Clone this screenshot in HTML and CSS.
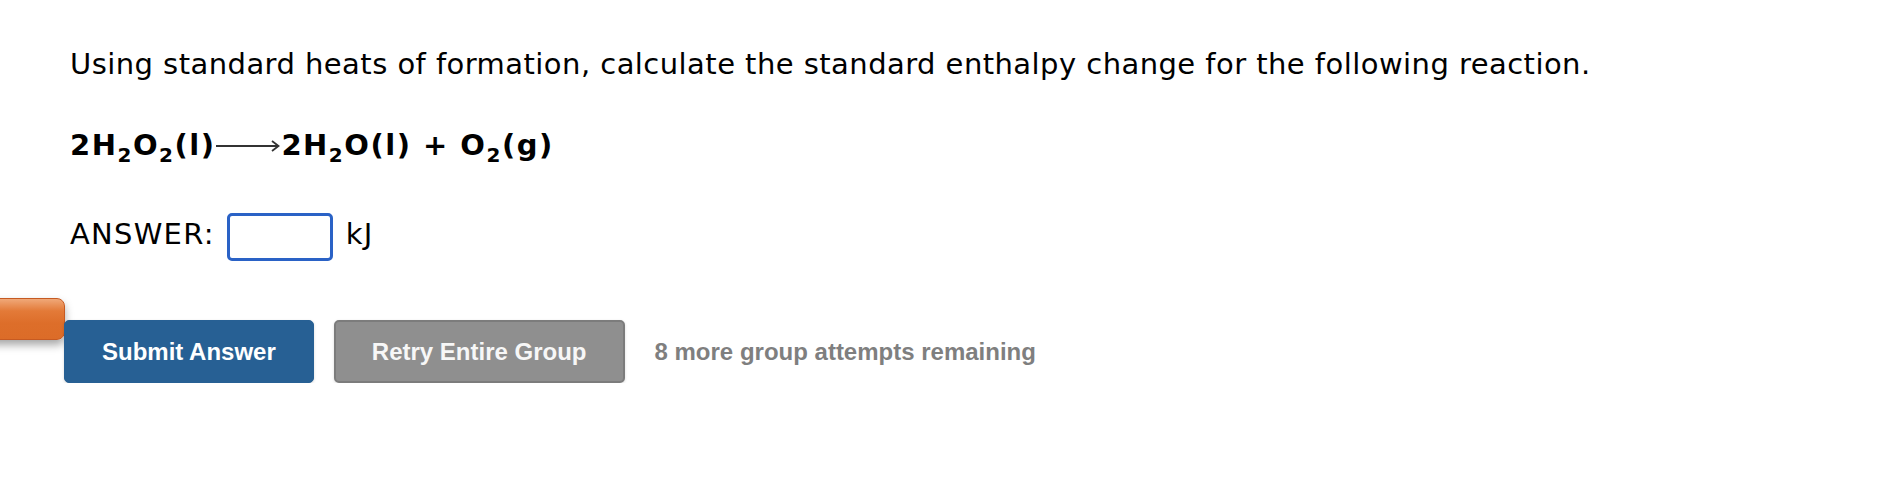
FILE: index.html
```html
<!DOCTYPE html>
<html lang="en">
<head>
<meta charset="utf-8">
<title>Question</title>
<link rel="stylesheet" href="styles.css">
</head>
<body>
<div class="side-tab"></div>
<main class="question">
  <p class="prompt">Using standard heats of formation, calculate the standard enthalpy change for the following reaction.</p>
  <p class="equation">2H<span class="sub">2</span>O<span class="sub">2</span>(l)<svg class="arrow" width="64" height="12" viewBox="0 0 64 12"><line x1="0" y1="6" x2="62" y2="6" stroke="#333" stroke-width="2"/><path d="M56 1 L62.5 6 L56 11" fill="none" stroke="#333" stroke-width="1.8"/></svg>2H<span class="sub">2</span>O(l) + O<span class="sub">2</span>(g)</p>
  <div class="answer-row">
    <span class="label">ANSWER:</span>
    <input class="answer-input" type="text" aria-label="answer">
    <span class="unit">kJ</span>
  </div>
  <div class="actions">
    <button class="btn btn-submit">Submit Answer</button>
    <button class="btn btn-retry">Retry Entire Group</button>
    <span class="attempts">8 more group attempts remaining</span>
  </div>
</main>
</body>
</html>
```
FILE: styles.css
```css
html, body {
  margin: 0;
  padding: 0;
  background: #ffffff;
}
body {
  font-family: "DejaVu Sans", Verdana, sans-serif;
  color: #000;
}
.question {
  display: flex;
  flex-direction: column;
  padding: 47px 0 0 70px;
}
.prompt {
  margin: 0;
  font-size: 29px;
  line-height: 34px;
  letter-spacing: 0.45px;
}
.equation {
  margin: 47px 0 0 0;
  font-size: 29px;
  line-height: 34px;
  font-weight: bold;
  letter-spacing: 1.5px;
  white-space: nowrap;
}
.sub {
  font-size: 20px;
  line-height: 0;
  position: relative;
  top: 7px;
}
.arrow {
  vertical-align: 3px;
  margin: 0 1px 0 1px;
}
.answer-row {
  display: flex;
  align-items: flex-start;
  margin-top: 51px;
  height: 48px;
}
.label, .unit {
  font-size: 29px;
  line-height: 34px;
  letter-spacing: 1.25px;
  margin-top: 4px;
}
.answer-input {
  box-sizing: border-box;
  width: 106px;
  height: 48px;
  margin: 0 13px 0 12px;
  border: 3px solid #2a62c6;
  border-radius: 5px;
  padding: 0;
  background: #fff;
  outline: none;
}
.actions {
  display: flex;
  align-items: center;
  margin-top: 59px;
  margin-left: -6px;
  gap: 20px;
}
.btn {
  position: relative;
  z-index: 1;
  box-sizing: border-box;
  height: 63px;
  padding: 0 37px;
  border-radius: 5px;
  font-family: "Liberation Sans", Arial, sans-serif;
  font-weight: bold;
  font-size: 24px;
  color: #fff;
  cursor: pointer;
}
.btn-submit {
  background: #276094;
  border: 1px solid #276094;
  box-shadow: 0 1px 3px rgba(0,0,0,0.15);
}
.btn-retry {
  padding: 0 36px;
  background: #8f8f8f;
  border: 2px solid #7c7c7c;
  color: #f7f7f7;
  box-shadow: 0 1px 3px rgba(0,0,0,0.15);
}
.attempts {
  margin-left: 10px;
  font-family: "Liberation Sans", Arial, sans-serif;
  font-weight: bold;
  font-size: 24px;
  color: #7f7f7f;
}
.side-tab {
  position: absolute;
  left: -20px;
  top: 298px;
  width: 85px;
  height: 42px;
  box-sizing: border-box;
  border: 1px solid #c65a22;
  border-radius: 8px;
  background: linear-gradient(to bottom, #f0a878 0%, #e37a38 30%, #dd6e2a 60%, #dc6c28 100%);
  box-shadow: 0 5px 8px rgba(0,0,0,0.35);
  z-index: 0;
}
```
